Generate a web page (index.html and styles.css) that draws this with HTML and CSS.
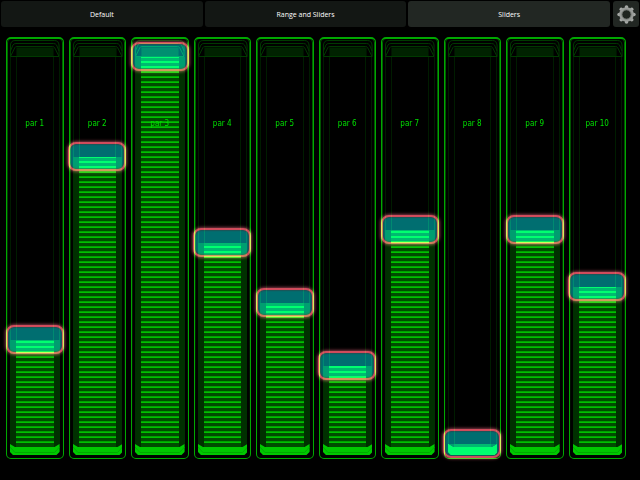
FILE: index.html
```html
<!DOCTYPE html>
<html lang="en">
<head>
<meta charset="utf-8">
<title>Sliders</title>
<link rel="stylesheet" href="styles.css">
</head>
<body>
<nav class="tabs">
  <div class="pages">
    <button class="tab">Default</button>
    <button class="tab">Range and Sliders</button>
    <button class="tab active">Sliders</button>
  </div>
  <button class="gear" aria-label="Settings">
    <svg viewBox="0 0 20 20" width="19" height="19">
      <g fill="#a5a8a5">
        <circle cx="10" cy="2.2" r="1.9"/><circle cx="15.5" cy="4.5" r="1.9"/><circle cx="17.8" cy="10" r="1.9"/><circle cx="15.5" cy="15.5" r="1.9"/>
        <circle cx="10" cy="17.8" r="1.9"/><circle cx="4.5" cy="15.5" r="1.9"/><circle cx="2.2" cy="10" r="1.9"/><circle cx="4.5" cy="4.5" r="1.9"/>
      </g>
      <circle cx="10" cy="10" r="6.2" fill="#202520" stroke="#9a9d9a" stroke-width="3"/>
      <circle cx="10" cy="10" r="4.9" fill="none" stroke="#707470"/>
    </svg>
  </button>
</nav>
<main class="bank" id="bank"></main>
<template id="channel">
  <div class="channel">
    <svg class="cap" viewBox="0 0 58 20" preserveAspectRatio="none">
      <path d="M10.500 10.500H48V19H10.500Z" fill="#002200"/>
      <path d="M4.500 19.500V8Q5 3.500 9 3.500H49Q53 3.500 53.500 8V19.500ZM4.500 14L7 8Q8 6.500 10 6.500H48Q50 6.500 51 8L53.500 14M4.500 19.500L9 10.500Q9.500 9.500 11 9.500H47Q48.500 9.500 49 10.500L53.500 19.500" fill="none" stroke="#003a00"/>
    </svg>
    <div class="rails"></div>
    <div class="fill"></div>
    <svg class="foot" viewBox="0 0 50 11" preserveAspectRatio="none">
      <path d="M0 0L5 3H45L50 0V8L47 11H3L0 8Z" fill="#00c800"/>
      <path d="M0 3L5 8.500H45L50 3" fill="none" stroke="#00a800"/>
    </svg>
    <label class="name"></label>
    <input class="fader" type="range" min="0" max="387">
  </div>
</template>
<script src="main.js"></script>
</body>
</html>
```
FILE: styles.css
```css
* { box-sizing: border-box; }
body {
  margin: 0;
  min-height: 100vh;
  display: flex;
  flex-direction: column;
  background: #000;
}
.tabs { display: flex; gap: 3px; padding: 1px; height: 28px; }
.pages { flex: 1; display: flex; gap: 2px; }
.tab, .gear {
  border: 0;
  padding: 0;
  border-radius: 3px;
  background: #131714;
  color: #fff;
  font: 7px "Open Sans", sans-serif;
}
.tab { flex: 1; }
.tab.active, .gear { background: #222723; }
.gear { width: 26px; display: grid; place-items: center; }
.bank {
  flex: 1;
  display: grid;
  grid-template-columns: repeat(10, 1fr);
  gap: 5px;
  padding: 9px 14px 21px 6px;
}
.channel {
  position: relative;
  isolation: isolate;
  border: 1px solid #00a800;
  border-top-width: 2px;
  border-radius: 5px;
}
.channel::before {
  content: "";
  position: absolute;
  inset: 0;
  border: solid #006a00;
  border-width: 0 1px;
  border-radius: 4px;
  mask-image: linear-gradient(#000, transparent);
}
.cap { position: absolute; left: -1px; top: -2px; width: calc(100% + 2px); height: 20px; }
.rails, .fill { position: absolute; left: 3px; right: 3px; }
.rails { top: 18px; bottom: 6px; border: solid #001c00; border-width: 0 1px; }
.rails::before {
  content: "";
  position: absolute;
  inset: 0 5px;
  border: solid #001c00;
  border-width: 0 1px;
}
.fill {
  bottom: 7px;
  height: calc(var(--level) * 1px);
  background: #003000;
}
.fill::before {
  content: "";
  position: absolute;
  inset: 0 6px;
  background: #004c00;
}
.fill::after {
  content: "";
  position: absolute;
  inset: 0 6px 8px;
  background: repeating-linear-gradient(to top, #00c000 0 1px, #00a000 1px 2px, #004c00 2px 5px);
}
.foot { position: absolute; left: 3px; bottom: 3px; width: calc(100% - 6px); height: 11px; }
.name {
  position: absolute;
  top: 80px;
  left: 0;
  right: 0;
  text-align: center;
  font: 8px/10px "DejaVu Sans Condensed", sans-serif;
  color: #00e000;
}
.fader {
  appearance: none;
  position: absolute;
  top: 3px;
  left: -1px;
  width: calc(100% + 2px);
  height: calc(100% - 3px);
  margin: 0;
  writing-mode: vertical-lr;
  direction: rtl;
  background: transparent;
  mix-blend-mode: plus-lighter;
}
.fader::-webkit-slider-thumb {
  appearance: none;
  width: 58px;
  height: 29px;
  border: 2px solid #d04c5c;
  border-radius: 8px;
  background: #006e70;
  box-shadow: 0 0 3px 1px #803844, inset 0 0 2px #601820;
}
```
FILE: main.js
```js
const levels = [104, 287, 387, 201, 141, 78, 214, 0, 214, 157];
const bank = document.getElementById("bank");
const template = document.getElementById("channel");

levels.forEach((level, i) => {
  const channel = template.content.cloneNode(true);
  const box = channel.querySelector(".channel");
  const name = channel.querySelector(".name");
  const fader = channel.querySelector(".fader");
  const setLevel = () => box.style.setProperty("--level", Number(fader.value) + 7);
  name.textContent = "par " + (i + 1);
  name.htmlFor = fader.id = "par" + (i + 1);
  fader.value = level;
  fader.addEventListener("input", setLevel);
  setLevel();
  bank.append(channel);
});
```
